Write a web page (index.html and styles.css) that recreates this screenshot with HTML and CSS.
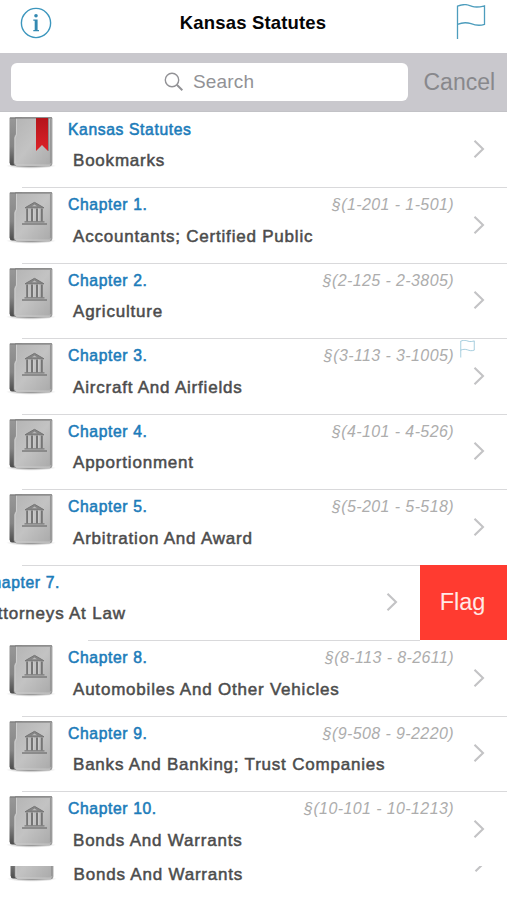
FILE: index.html
```
<!DOCTYPE html>
<html lang="en">
<head>
<meta charset="utf-8">
<title>Kansas Statutes</title>
<link rel="stylesheet" href="styles.css">
</head>
<body>
<svg class="defs" aria-hidden="true">
  <defs>
    <linearGradient id="cover" x1="0" y1="0" x2="1" y2="1">
      <stop offset="0" stop-color="#b4b4b4"/><stop offset=".5" stop-color="#c3c3c3"/><stop offset="1" stop-color="#a9a9a9"/>
    </linearGradient>
    <linearGradient id="back" x1="0" y1="0" x2="0" y2="1">
      <stop offset="0" stop-color="#989898"/><stop offset=".6" stop-color="#858585"/><stop offset="1" stop-color="#4c4c4c"/>
    </linearGradient>
    <linearGradient id="ribbon" x1="0" y1="0" x2="0" y2="1">
      <stop offset="0" stop-color="#b5151b"/><stop offset="1" stop-color="#dc2228"/>
    </linearGradient>
    <radialGradient id="shadow"><stop offset="0" stop-color="#555" stop-opacity=".75"/><stop offset="1" stop-color="#888" stop-opacity="0"/></radialGradient>
  </defs>
  <symbol id="book" viewBox="0 0 50 54">
    <ellipse cx="25" cy="48.800" rx="25" ry="3" fill="url(#shadow)"/>
    <path d="M4 .5H16V48.500H6Q3.500 48 3.500 45.500V1Z" fill="url(#back)"/>
    <path d="M9.500 .5H45Q46 .5 46 1.500V46.500Q46 49 43.500 49H11Q8.500 49 8 46.500V20L9.500 17Z" fill="url(#cover)" stroke="#8b8b8b" stroke-width=".7"/>
    <path d="M10.500 1.500V17.500L9 21V46" fill="none" stroke="#d2d2d2" stroke-width=".8"/>
    <path d="M4 1H46" stroke="#777"/>
    <path d="M44.700 2V46" stroke="#979797" stroke-width="1.500"/>
    <path d="M10 48.200H44" stroke="#ddd" stroke-width=".7"/>
  </symbol>
  <symbol id="bank" viewBox="0 0 26 24">
    <path d="M13 .8L22.500 6.300H3.500Z" fill="#858585" stroke="#757575" stroke-width="1"/>
    <path d="M10.500 4.700L13 3L15.500 4.700Z" fill="#bbb"/>
    <path d="M5.700 7V20M10.500 7V20M15.500 7V20M20.300 7V20" stroke="#757575" stroke-width="2"/>
    <path d="M7.200 7V20M12 7V20M17 7V20" stroke="#cfcfcf" stroke-width=".7"/>
    <path d="M3 20.300H23M.5 22.500H25.500" stroke="#7b7b7b" stroke-width="1.300"/>
  </symbol>
  <symbol id="book-chapter" viewBox="0 0 50 54">
    <use href="#book" width="50" height="54"/>
    <use href="#bank" x="15.500" y="9.500" width="26" height="24"/>
  </symbol>
  <symbol id="book-marked" viewBox="0 0 50 54">
    <use href="#book" width="50" height="54"/>
    <path d="M30 1H42V34L36 28L30 34Z" fill="url(#ribbon)"/>
    <path d="M42.500 1V34" stroke="#777" stroke-width=".7"/>
  </symbol>
  <symbol id="chevron" viewBox="0 0 12 20">
    <path d="M1.500 1.700L10 10L1.500 18.300" fill="none" stroke="#c3c3c5" stroke-width="2.100"/>
  </symbol>
  <symbol id="flag" viewBox="0 0 30 36">
    <path d="M1.500 35V2.200C9-.8 12 1 16 2.300C21 4 25 2.700 28.500 1.800V20.300C23 22.300 19 21.200 15 19.700C10 18 6 18.500 1.500 20.300" fill="none" stroke="currentColor" stroke-width="1.300"/>
  </symbol>
</svg>

<div class="app">
  <header class="nav">
    <svg class="info" viewBox="0 0 32 32">
      <circle cx="16" cy="16" r="14.600" fill="none" stroke="#3c96bd" stroke-width="1.400"/>
      <circle cx="16" cy="8.800" r="1.800" fill="#3489b1"/>
      <path d="M13.300 12.600H17.600V23H19V24.200H13.300V23H14.700V13.800H13.300Z" fill="#3489b1"/>
    </svg>
    <h1>Kansas Statutes</h1>
    <svg class="nav-flag"><use href="#flag"/></svg>
  </header>

  <div class="search">
    <div class="field">
      <svg class="lens" viewBox="0 0 20 20"><circle cx="8" cy="8" r="6.700" fill="none" stroke="#929296" stroke-width="1.400"/><path d="M12.800 12.800L18.300 18.200" stroke="#929296" stroke-width="2"/></svg>
      <span>Search</span>
    </div>
    <span class="cancel">Cancel</span>
  </div>

  <main class="list">
    <div class="row"><svg class="icon"><use href="#book-marked"/></svg><div class="text"><div class="top"><b>Kansas Statutes</b></div><p>Bookmarks</p></div><svg class="chev"><use href="#chevron"/></svg></div>
    <div class="row"><svg class="icon"><use href="#book-chapter"/></svg><div class="text"><div class="top"><b>Chapter 1.</b><i>§(1-201 - 1-501)</i></div><p>Accountants; Certified Public</p></div><svg class="chev"><use href="#chevron"/></svg></div>
    <div class="row"><svg class="icon"><use href="#book-chapter"/></svg><div class="text"><div class="top"><b>Chapter 2.</b><i>§(2-125 - 2-3805)</i></div><p>Agriculture</p></div><svg class="chev"><use href="#chevron"/></svg></div>
    <div class="row"><svg class="icon"><use href="#book-chapter"/></svg><div class="text"><div class="top"><b>Chapter 3.</b><i>§(3-113 - 3-1005)</i></div><p>Aircraft And Airfields</p></div><svg class="chev"><use href="#chevron"/></svg><svg class="badge"><use href="#flag" width="17" height="18"/></svg></div>
    <div class="row"><svg class="icon"><use href="#book-chapter"/></svg><div class="text"><div class="top"><b>Chapter 4.</b><i>§(4-101 - 4-526)</i></div><p>Apportionment</p></div><svg class="chev"><use href="#chevron"/></svg></div>
    <div class="row"><svg class="icon"><use href="#book-chapter"/></svg><div class="text"><div class="top"><b>Chapter 5.</b><i>§(5-201 - 5-518)</i></div><p>Arbitration And Award</p></div><svg class="chev"><use href="#chevron"/></svg></div>
    <div class="swipe">
      <div class="row swiped"><div class="icon"></div><div class="text"><div class="top"><b>Chapter 7.</b></div><p>Attorneys At Law</p></div><svg class="chev"><use href="#chevron"/></svg></div>
      <div class="action">Flag</div>
    </div>
    <div class="row"><svg class="icon"><use href="#book-chapter"/></svg><div class="text"><div class="top"><b>Chapter 8.</b><i>§(8-113 - 8-2611)</i></div><p>Automobiles And Other Vehicles</p></div><svg class="chev"><use href="#chevron"/></svg></div>
    <div class="row"><svg class="icon"><use href="#book-chapter"/></svg><div class="text"><div class="top"><b>Chapter 9.</b><i>§(9-508 - 9-2220)</i></div><p>Banks And Banking; Trust Companies</p></div><svg class="chev"><use href="#chevron"/></svg></div>
    <div class="row last"><svg class="icon"><use href="#book-chapter"/></svg><div class="text"><div class="top"><b>Chapter 10.</b><i>§(10-101 - 10-1213)</i></div><p>Bonds And Warrants</p></div><svg class="chev"><use href="#chevron"/></svg></div>
    <div class="tail">
      <div class="row last"><svg class="icon"><use href="#book"/></svg><div class="text"><div class="top"></div><p>Bonds And Warrants</p></div><svg class="chev"><use href="#chevron"/></svg></div>
    </div>
  </main>
</div>
</body>
</html>
```

FILE: styles.css
```
* { box-sizing: border-box; }
body { margin: 0; background: #fff; font-family: "Liberation Sans", Arial, sans-serif; }
h1, p { margin: 0; }
svg { display: block; flex: none; }
.defs { position: absolute; width: 0; height: 0; }
.app { width: 507px; height: 900px; overflow: hidden; }

.nav { height: 53px; padding: 0 21px 0 20px; display: grid; grid-template-columns: 33px 1fr 33px; align-items: start; }
.info { width: 32px; height: 32px; margin-top: 7px; }
.nav h1 { font-size: 18.5px; line-height: 22px; letter-spacing: .17px; text-align: center; margin-top: 12px; color: #050505; }
.nav-flag { width: 30px; height: 36px; margin: 4px 0 0 3px; color: #4d9dbd; }

.search { height: 58.6px; background: #c9c8cd; display: flex; align-items: flex-start; padding: 10px 0 0 11px; border-bottom: 1px solid #c2c2c6; }
.field { width: 397px; height: 38px; border-radius: 6px; background: #fff; display: flex; align-items: center; padding-left: 153px; gap: 9px; color: #929296; font-size: 19px; letter-spacing: .15px; }
.lens { width: 20px; height: 20px; }
.cancel { margin-left: 15.5px; font-size: 23px; line-height: 38px; color: #88888c; }

.row { position: relative; height: 75.5px; display: flex; align-items: flex-start; }
.row::after { content: ""; position: absolute; left: 22px; right: 0; bottom: -1px; height: 1px; background: #d9d9db; }
.row.last::after { display: none; }
.icon { width: 50px; height: 54px; margin: 5px 12px 0 6px; flex: none; }
.text { width: 386px; flex: none; white-space: nowrap; }
.top { display: flex; justify-content: space-between; height: 32px; padding-top: 8px; line-height: 19px; font-size: 15.7px; }
.top b { font-weight: 400; color: #1c7cba; letter-spacing: .62px; -webkit-text-stroke: .55px #1c7cba; }
.top i { font-size: 16px; letter-spacing: .4px; color: #adadad; }
.text p { padding: 7.5px 0 0 5px; font-size: 17px; line-height: 20px; letter-spacing: .79px; color: #4c4c4c; -webkit-text-stroke: .5px #4c4c4c; }
.chev { width: 12px; height: 20px; margin: 27.5px 0 0 19px; }
.badge { position: absolute; left: 459px; top: 2px; width: 17px; height: 18px; color: #77b3cc; }

.swipe { height: 75.5px; display: flex; }
.swiped { width: 507px; margin-left: -87.5px; flex: none; }
.swiped::after { left: 175px; }
.action { position: relative; width: 88px; flex: none; height: 75.5px; background: #ff3b30; color: #ffe9e6; font-size: 23.5px; line-height: 75px; text-align: center; padding-right: 2px; }
.action::after { content: ""; position: absolute; right: 0; top: 75px; width: 1px; height: 34px; background: #f77f78; }

.row.last { height: 74.9px; }
.tail { height: 34px; overflow: hidden; }
.tail .row { margin-top: -40.5px; margin-left: .6px; }
```
